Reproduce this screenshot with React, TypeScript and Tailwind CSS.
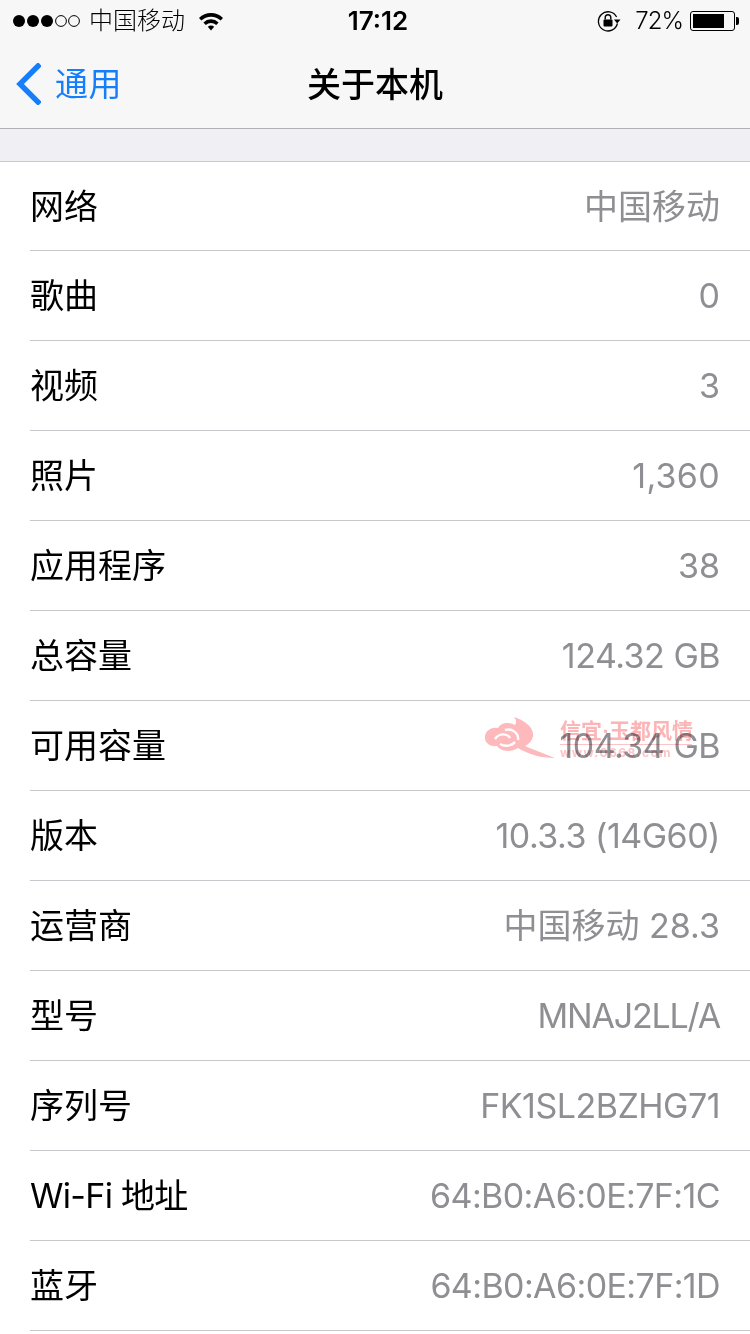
const rows = [
  ["网络", "中国移动", "tracking-normal"],
  ["歌曲", "0", "tracking-normal"],
  ["视频", "3", "tracking-normal"],
  ["照片", "1,360", "tracking-[0.3px]"],
  ["应用程序", "38", "tracking-normal"],
  ["总容量", "124.32 GB", "tracking-[-0.5px]"],
  ["可用容量", "104.34 GB", "tracking-[-0.5px]"],
  ["版本", "10.3.3 (14G60)", "tracking-[-0.5px]"],
  ["运营商", "中国移动 28.3", "tracking-normal"],
  ["型号", "MNAJ2LL/A", "tracking-[-1.2px]"],
  ["序列号", "FK1SL2BZHG71", "tracking-[-0.5px]"],
  ["Wi-Fi 地址", "64:B0:A6:0E:7F:1C", "tracking-[-0.6px]"],
  ["蓝牙", "64:B0:A6:0E:7F:1D", "tracking-[-0.6px]"],
];

function Signal() {
  return (
    <svg width="68" height="16" viewBox="0 0 68 16">
      <circle cx="6" cy="8" r="6" fill="#000" />
      <circle cx="20" cy="8" r="6" fill="#000" />
      <circle cx="34" cy="8" r="6" fill="#000" />
      <circle cx="48" cy="8" r="5.4" fill="none" stroke="#000" strokeWidth="1" />
      <circle cx="61" cy="8" r="5.4" fill="none" stroke="#000" strokeWidth="1" />
    </svg>
  );
}

function Wifi() {
  return (
    <svg width="26" height="20" viewBox="0 0 26 20">
      <path d="M1 7 A17 17 0 0 1 25 7 L22.6 9.6 A13.6 13.6 0 0 0 3.4 9.6 Z" fill="#000" />
      <path d="M5.4 11.4 A11 11 0 0 1 20.6 11.4 L18.2 14 A7.6 7.6 0 0 0 7.8 14 Z" fill="#000" />
      <path d="M9.8 15.8 A5 5 0 0 1 16.2 15.8 L13 19.4 Z" fill="#000" />
    </svg>
  );
}

function RotationLock() {
  return (
    <svg width="24" height="22" viewBox="0 0 24 22">
      <path d="M20.4 13.5 A9.6 9.6 0 1 1 19.6 7" fill="none" stroke="#000" strokeWidth="1.3" />
      <path d="M17 9.5 L23.5 9.5 L20.2 13.5 Z" fill="#000" />
      <rect x="6.5" y="9.5" width="9" height="7" rx="1" fill="#000" />
      <path d="M8.2 9.5 V7.6 A2.8 2.8 0 0 1 13.8 7.6 V9.5" fill="none" stroke="#000" strokeWidth="1.4" />
    </svg>
  );
}

function Battery() {
  return (
    <div className="flex items-center">
      <div className="h-[20px] w-[45px] rounded-[3px] border border-black p-[2px]">
        <div className="h-full w-[31px] bg-black" />
      </div>
      <div className="ml-[1px] h-[8px] w-[3px] rounded-r-[2px] bg-black" />
    </div>
  );
}

function Watermark() {
  return (
    <div className="absolute left-[484px] top-[716px] flex items-start mix-blend-multiply">
      <svg width="76" height="46" viewBox="0 0 76 46">
        <path
          d="M30 1 C42 5 50 12 49 20 C48 25 45 28 41 30 C48 33 58 37 71 42 C56 42 44 38 34 32 C26 37 16 35 13 30 C5 31 0 26 1 20 C2 14 8 11 14 12 C17 6 25 6 31 9 C33 6 32 4 30 1 Z"
          fill="#fdb9bb"
        />
        <path d="M11 23 C15 17 23 17 26 22 M21 14 C28 12 35 17 34 24 M16 28 C21 31 28 30 31 26" fill="none" stroke="#fff" strokeWidth="2.4" />
      </svg>
      <div className="mt-[3px] flex flex-col items-start">
        <div className="font-['Liberation_Serif','Noto_Sans_CJK_SC',serif] text-[21px] font-bold leading-[24px] text-[#fcb4b6]">
          信宜·玉都风情
        </div>
        <div className="mt-[1px] h-px w-[132px] bg-[#fcc4c6]" />
        <div className="text-[12px] font-bold leading-[16px] tracking-[1.5px] text-[#fcc4c6]">www.0668.com</div>
      </div>
    </div>
  );
}

export default function App() {
  return (
    <div className="relative h-[1334px] w-[750px] overflow-hidden bg-white font-['Inter','Noto_Sans_CJK_SC',sans-serif] text-black">
      {/* NAV */}
      <div className="h-[129px] border-b border-[#b0b0b5] bg-[#f7f7f8]">
        <div className="flex h-[41px] items-center justify-between pl-[13px] pr-[11px]">
          <div className="flex w-[302px] items-center">
            <Signal />
            <span className="ml-[8px] text-[24px] font-light leading-none">中国移动</span>
            <span className="ml-[13px]"><Wifi /></span>
          </div>
          <span className="text-[26px] font-semibold leading-none">17:12</span>
          <div className="flex w-[298px] items-center justify-end">
            <RotationLock />
            <span className="ml-[14px] mr-[7px] text-[24px] font-light leading-none tracking-[-1px]">72%</span>
            <Battery />
          </div>
        </div>
        <div className="relative flex h-[87px] items-center justify-center">
          <div className="absolute left-[15px] top-[22px] flex items-center text-[#157efb]">
            <svg width="26" height="42" viewBox="0 0 26 42">
              <path d="M23 3 L5 21 L23 39" fill="none" stroke="#157efb" strokeWidth="5.4" strokeLinecap="square" />
            </svg>
            <span className="ml-[14px] text-[33px] font-normal leading-none tracking-[0.5px]">通用</span>
          </div>
          <span className="text-[34px] font-medium leading-none">关于本机</span>
        </div>
      </div>

      {/* GAP */}
      <div className="h-[33px] border-b border-[#c8c7cc] bg-[#efeff4]" />

      {/* LIST */}
      <div className="pl-[30px]">
        {rows.map(([label, value, spacing], i) => (
          <div
            key={label}
            className={
              i === 0
                ? "flex h-[89px] items-center justify-between border-b border-[#c8c7cc] pr-[30px]"
                : "flex h-[90px] items-center justify-between border-b border-[#c8c7cc] pr-[30px]"
            }
          >
            <span className={label.startsWith("Wi") ? "text-[34px] font-normal tracking-[-0.7px]" : "text-[34px] font-normal"}>
              {label}
            </span>
            <span className={`text-[34px] font-normal text-[#8e8e93] ${spacing}`}>{value}</span>
          </div>
        ))}
      </div>

      <Watermark />
    </div>
  );
}
